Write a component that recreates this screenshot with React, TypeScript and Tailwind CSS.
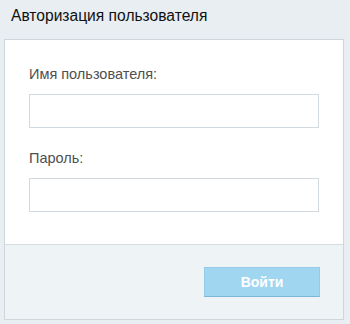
export default function App() {
  return (
    <div
      className="w-[350px] h-[324px] bg-[#e8eef1] pl-[4px] pr-[6px] flex flex-col"
      style={{ fontFamily: '"Liberation Sans", Arial, sans-serif' }}
    >
      <div className="h-[39px] pt-[6px] pl-[7px] text-[15.6px] leading-[20px] text-[#111]">
        Авторизация пользователя
      </div>
      <div className="w-[340px] border border-[#cdd7dc] bg-white flex flex-col">
        <div className="px-[24px] pt-[26px] pb-[32px] flex flex-col">
          <label className="text-[14.5px] leading-[16px] text-[#4f4f4f] h-[16px]">Имя пользователя:</label>
          <input
            type="text"
            className="mt-[12px] h-[34px] w-[290px] border border-[#d2dadf] bg-white outline-none"
          />
          <label className="mt-[22px] text-[14.5px] leading-[16px] text-[#4f4f4f] h-[16px]">Пароль:</label>
          <input
            type="password"
            className="mt-[12px] h-[34px] w-[290px] border border-[#d2dadf] bg-white outline-none"
          />
        </div>
        <div className="border-t border-[#d3dce1] bg-[#eef3f6] px-[23px] py-[22px] flex justify-end">
          <button className="w-[116px] h-[30px] bg-[#a1d6f1] border border-[#95cbe6] border-b-[#7db6d6] text-white font-bold text-[14px] leading-[16px]">
            Войти
          </button>
        </div>
      </div>
    </div>
  );
}
